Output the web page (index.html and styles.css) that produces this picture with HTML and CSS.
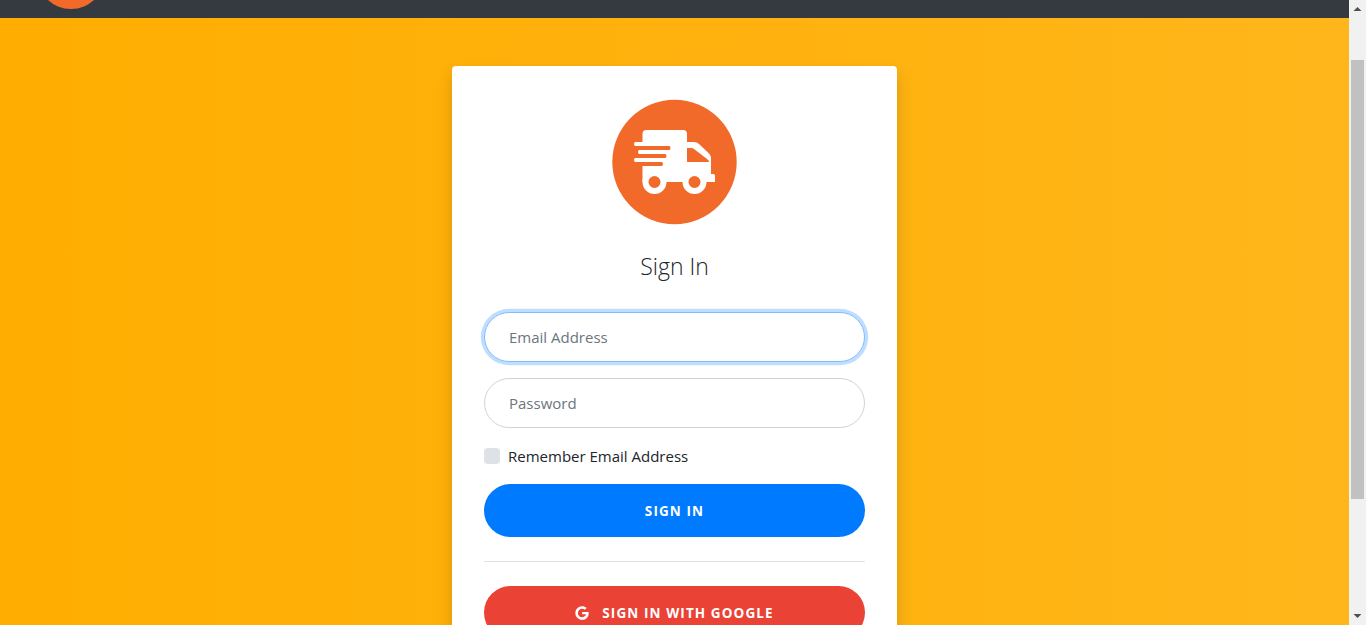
FILE: index.html
```html
<!DOCTYPE html>
<html lang="en">
<head>
<meta charset="utf-8">
<title>Sign In</title>
<link rel="stylesheet" href="styles.css">
</head>
<body>
<div class="page">
  <header class="navbar"><span class="brand"></span></header>
  <main class="content">
    <section class="card">
      <svg class="logo" viewBox="612 99 125 126" aria-hidden="true">
        <circle cx="674.5" cy="162" r="62.2" fill="#f26a2a"/>
        <path fill="#fff" d="M646.5 130H683Q687 130 687 134V142H694Q697 142 699 144L709 153.500Q711 155.500 711 158.500V174H713.500Q715 174 715 175.500V182H642.500V166H661.500Q663 166 663 164T661.500 162H635.500Q634 162 634 160T635.500 158H665Q666.500 158 666.500 156T665 154H639.500Q638 154 638 152T639.500 150H669Q670.500 150 670.500 148T669 146H635.500Q634 146 634 144T635.500 142H642.500V134Q642.500 130 646.500 130Z"/>
        <path fill="#f26a2a" d="M687 148H691.500Q693 148 694 149L708 159.800Q709 160.500 709 162H687Z"/>
        <circle cx="654.500" cy="182" r="9" fill="#f26a2a" stroke="#fff" stroke-width="6"/>
        <circle cx="694.500" cy="182" r="9" fill="#f26a2a" stroke="#fff" stroke-width="6"/>
      </svg>
      <h1 class="title">Sign In</h1>
      <form class="form">
        <input class="field field-active" type="email" placeholder="Email Address">
        <input class="field" type="password" placeholder="Password">
        <label class="remember"><span class="box"></span><span>Remember Email Address</span></label>
        <button class="btn btn-primary" type="button">Sign in</button>
        <hr class="rule">
        <button class="btn btn-google" type="button">
          <svg class="google" viewBox="0 0 488 512" aria-hidden="true"><path fill="currentColor" d="M488 261.800C488 403.300 391.100 504 248 504 110.800 504 0 393.200 0 256S110.800 8 248 8c66.800 0 123 24.500 166.300 64.900l-67.500 64.900C258.500 52.600 94.300 116.600 94.300 256c0 86.500 69.100 156.600 153.700 156.600 98.200 0 135-70.400 140.800-106.900H248v-85.300h236.100c2.300 12.700 3.900 24.900 3.900 41.400z"/></svg>
          <span>Sign in with Google</span>
        </button>
      </form>
    </section>
  </main>
</div>
<div class="scrollbar">
  <svg class="arrow" viewBox="0 0 17 17"><path fill="#505050" d="M4.500 11L8.500 7L12.500 11Z"/></svg>
  <span class="thumb"></span>
  <svg class="arrow" viewBox="0 0 17 17"><path fill="#505050" d="M4.500 6L8.500 10L12.500 6Z"/></svg>
</div>
</body>
</html>
```
FILE: styles.css
```css
* { box-sizing: border-box; }
body {
  margin: 0;
  height: 625px;
  display: flex;
  overflow: hidden;
  color: #212529;
  font-family: "Open Sans", "Noto Sans", sans-serif;
  font-size: 15px;
}
.page {
  flex: 1;
  height: 625px;
  overflow: hidden;
  background: linear-gradient(to right, #ffad00, #ffb61a);
}
.navbar {
  height: 18px;
  padding-left: 37px;
  display: flex;
  align-items: flex-end;
  overflow: hidden;
  background: #343a40;
}
.brand {
  flex: none;
  width: 68px;
  height: 68px;
  margin-bottom: 9px;
  border-radius: 50%;
  background: #f26a2a;
}
.content {
  display: flex;
  justify-content: center;
  padding-top: 48px;
}
.card {
  width: 445px;
  height: 680px;
  padding: 33px 32px;
  display: flex;
  flex-direction: column;
  align-items: center;
  border-radius: 4px;
  background: #fff;
  box-shadow: 0 8px 16px rgba(0, 0, 0, .15);
}
.logo { width: 125px; height: 126px; flex: none; }
.title {
  margin: 23px 0 28px;
  height: 36px;
  line-height: 36px;
  font-size: 23px;
  font-weight: 300;
}
.form { width: 381px; display: flex; flex-direction: column; }
.field {
  height: 50px;
  margin: 0 0 16px;
  padding: 0 24px 1px;
  border: 1px solid #ced4da;
  border-radius: 25px;
  outline: none;
  background: #fff;
  font: inherit;
}
.field::placeholder { color: #6c757d; opacity: 1; }
.field-active {
  border-color: #80bdff;
  box-shadow: 0 0 0 3.200px rgba(0, 123, 255, .25);
}
.remember {
  height: 24px;
  margin-bottom: 16px;
  display: flex;
  align-items: center;
  gap: 8px;
}
.box { width: 16px; height: 16px; border-radius: 4px; background: #dee2e6; }
.btn {
  height: 53px;
  padding: 0;
  border: 0;
  border-radius: 27px;
  display: flex;
  align-items: center;
  justify-content: center;
  color: #fff;
  font: 700 13.500px "Open Sans", "Noto Sans", sans-serif;
  letter-spacing: 1.100px;
  text-transform: uppercase;
}
.btn-primary { background: #007bff; }
.btn-google { background: #ea4335; }
.google { width: 14px; height: 14px; margin-right: 13px; }
.rule { width: 100%; height: 1px; margin: 24px 0; border: 0; background: #e2e3e5; }
.scrollbar {
  width: 17px;
  height: 625px;
  display: flex;
  flex-direction: column;
  align-items: center;
  background: #f1f1f1;
}
.arrow { width: 17px; height: 17px; flex: none; }
.thumb { width: 13px; height: 439px; margin: 43px 0 109px; flex: none; background: #c1c1c1; }
```
